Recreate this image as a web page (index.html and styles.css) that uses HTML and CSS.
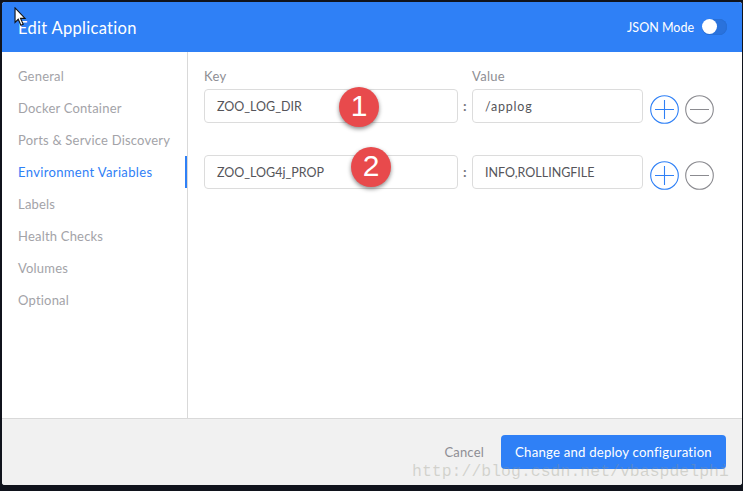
FILE: index.html
```html
<!DOCTYPE html>
<html lang="en">
<head>
<meta charset="utf-8">
<title>Edit Application</title>
<link rel="stylesheet" href="styles.css">
</head>
<body>
<div class="modal">
  <header class="head">
    <h1 class="title">Edit Application</h1>
    <div class="json">
      <span>JSON Mode</span>
      <span class="switch"><span class="knob"></span></span>
    </div>
  </header>
  <div class="main">
    <nav class="side">
      <a class="item">General</a>
      <a class="item">Docker Container</a>
      <a class="item">Ports &amp; Service Discovery</a>
      <a class="item active">Environment Variables</a>
      <a class="item">Labels</a>
      <a class="item">Health Checks</a>
      <a class="item">Volumes</a>
      <a class="item">Optional</a>
    </nav>
    <section class="content">
      <div class="labels">
        <span class="lab-key">Key</span>
        <span class="lab-val">Value</span>
      </div>
      <div class="row">
        <div class="field key">ZOO_LOG_DIR</div>
        <span class="colon">:</span>
        <div class="field val lower">/applog</div>
        <svg class="btn" viewBox="0 0 29 29"><circle cx="14.500" cy="14.500" r="13.800" fill="none" stroke="#2f80f6" stroke-width="1.100"/><path d="M5 14.500H24M14.500 5V24" fill="none" stroke="#2f80f6" stroke-width="1.100"/></svg>
        <svg class="btn" viewBox="0 0 29 29"><circle cx="14.500" cy="14.500" r="13.800" fill="none" stroke="#8b8b90" stroke-width="1.100"/><path d="M5 14.500H24" fill="none" stroke="#8b8b90" stroke-width="1.100"/></svg>
      </div>
      <div class="row">
        <div class="field key">ZOO_LOG4j_PROP</div>
        <span class="colon">:</span>
        <div class="field val">INFO,ROLLINGFILE</div>
        <svg class="btn" viewBox="0 0 29 29"><circle cx="14.500" cy="14.500" r="13.800" fill="none" stroke="#2f80f6" stroke-width="1.100"/><path d="M5 14.500H24M14.500 5V24" fill="none" stroke="#2f80f6" stroke-width="1.100"/></svg>
        <svg class="btn" viewBox="0 0 29 29"><circle cx="14.500" cy="14.500" r="13.800" fill="none" stroke="#8b8b90" stroke-width="1.100"/><path d="M5 14.500H24" fill="none" stroke="#8b8b90" stroke-width="1.100"/></svg>
      </div>
      <span class="badge badge-one">1</span>
      <span class="badge badge-two">2</span>
    </section>
  </div>
  <footer class="foot">
    <span class="cancel">Cancel</span>
    <span class="deploy">Change and deploy configuration</span>
  </footer>
</div>
<div class="mark">http://blog.csdn.net/vbaspdelphi</div>
<svg class="cursor" viewBox="0 0 14 22"><path d="M1 1V17L4.500 13.500L7.500 20L10 19L7 12.500H12Z" fill="#fff" stroke="#111" stroke-width="1.200"/></svg>
</body>
</html>
```
FILE: styles.css
```css
* { box-sizing: border-box; }
html, body { margin: 0; height: 100%; }
body {
  background: #10131c;
  padding: 2px 1px 6px 2px;
  font-family: "Lato", sans-serif;
  letter-spacing: .2px;
  overflow: hidden;
  position: relative;
}
.modal {
  height: 483px;
  display: flex;
  flex-direction: column;
  background: #fff;
  border-radius: 3px;
  overflow: hidden;
}
.head {
  height: 50px;
  flex: none;
  background: #2f80f6;
  color: #fff;
  display: flex;
  align-items: center;
  justify-content: space-between;
  padding: 0 15px 0 16px;
}
.title { margin: 0; font-size: 16.500px; font-weight: 400; line-height: 52px; height: 50px; letter-spacing: .3px; }
.json { display: flex; align-items: center; gap: 8px; font-size: 12.500px; letter-spacing: 0; }
.switch {
  width: 25px; height: 16px;
  border-radius: 8px;
  background: #2a72dc;
  display: block;
  box-shadow: inset 0 0 1px #1d5cb8;
}
.knob {
  display: block;
  width: 15px; height: 15px;
  border-radius: 50%;
  background: #fff;
}
.main { flex: 1; display: flex; min-height: 0; }
.side {
  width: 186px;
  flex: none;
  border-right: 1px solid #d9d9d9;
  padding-top: 8px;
  display: flex;
  flex-direction: column;
}
.item {
  height: 32px;
  line-height: 32px;
  padding-left: 16px;
  font-size: 13px;
  color: #a3a3a8;
}
.item.active {
  color: #2f80f6;
  border-right: 2px solid #2f80f6;
  letter-spacing: .35px;
}
.content { flex: 1; padding: 16px 0 0 16px; position: relative; }
.labels { display: flex; font-size: 13px; color: #8e8e94; height: 21px; line-height: 16px; letter-spacing: .3px; }
.lab-key { width: 268px; }
.row { display: flex; align-items: flex-start; height: 66px; }
.field {
  height: 34px;
  border: 1px solid #dcdcdc;
  border-radius: 4px;
  font-size: 12.500px;
  letter-spacing: 0;
  line-height: 33px;
  color: #55555a;
  padding-left: 12px;
  white-space: nowrap;
}
.key { width: 254px; }
.val { width: 171px; }
.val.lower { letter-spacing: .8px; }
.colon { width: 14px; text-align: center; color: #77777d; font-size: 14px; font-weight: 700; line-height: 34px; }
.btn { width: 29px; height: 29px; margin-top: 6px; flex: none; }
.val + .btn { margin-left: 7px; margin-right: 6px; }
.badge {
  position: absolute;
  width: 40px; height: 40px;
  border-radius: 50%;
  background: #e84a4c;
  color: #fff;
  font-family: "Liberation Sans", sans-serif;
  font-size: 30px;
  letter-spacing: 0;
  line-height: 38px;
  text-align: center;
  box-shadow: 0 2px 4px rgba(0,0,0,.45);
}
.badge-one { left: 151px; top: 35px; }
.badge-two { left: 163px; top: 95px; }
.foot {
  height: 67px;
  flex: none;
  background: #f1f1f1;
  border-top: 1px solid #d9d9d9;
  display: flex;
  align-items: flex-start;
  justify-content: flex-end;
  padding: 16px 16px 0 0;
}
.cancel { font-size: 13px; color: #8e8e94; line-height: 34px; margin-right: 17px; }
.deploy {
  background: #2f80f6;
  color: #fff;
  font-size: 13.200px;
  height: 34px;
  line-height: 34px;
  width: 225px;
  text-align: center;
  border-radius: 4px;
}
.mark {
  position: absolute;
  left: 412px;
  top: 462px;
  font-family: "Liberation Mono", monospace;
  font-size: 16.500px;
  letter-spacing: 0;
  color: rgba(150,150,135,.34);
  white-space: nowrap;
}
.cursor { position: absolute; left: 14px; top: 7px; width: 13px; height: 20px; }
```
